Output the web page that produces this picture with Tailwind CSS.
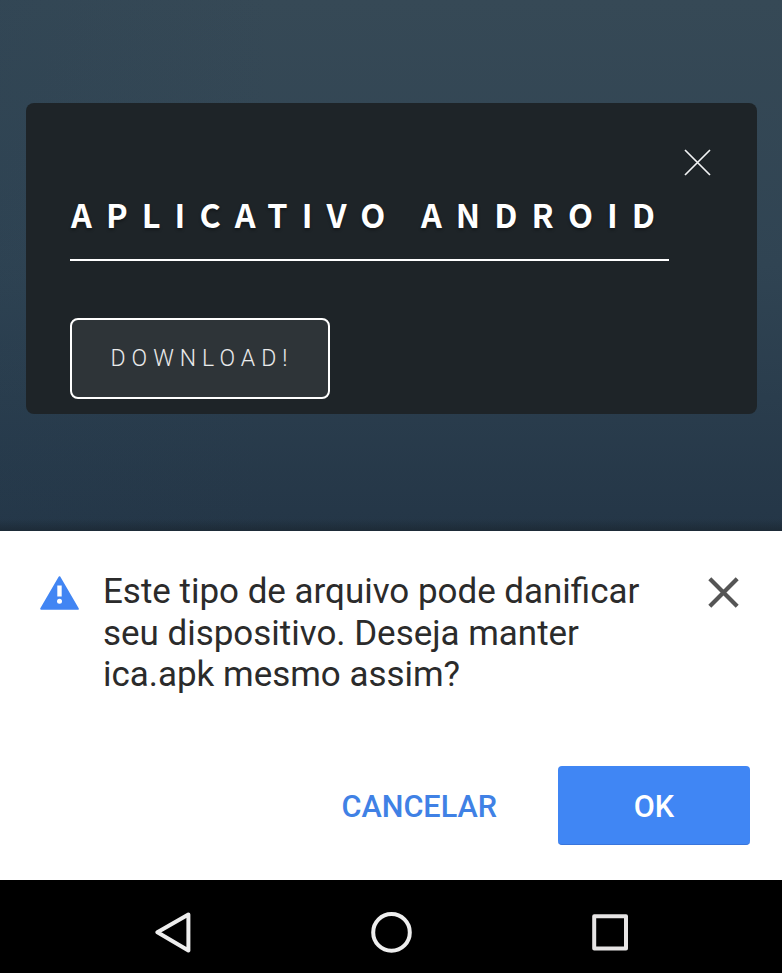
<!DOCTYPE html>
<html lang="pt-BR">
<head>
<meta charset="utf-8">
<title>Aplicativo Android</title>
<script src="https://cdn.jsdelivr.net/npm/@tailwindcss/browser@4"></script>
</head>
<body class="flex h-[973px] w-[782px] flex-col overflow-hidden bg-black font-['Roboto',sans-serif]">
  <main class="h-[531px] shrink-0 bg-[linear-gradient(to_top,rgba(20,28,34,.45),transparent_12px),linear-gradient(to_right,rgba(36,60,80,.2),transparent_35%),linear-gradient(to_bottom,#364956,#304453_50%,#243647)] px-[26px] pt-[103px]">
    <section class="flex h-[311px] w-[731px] justify-between rounded-lg bg-[#1e2428] pl-[44px] pr-[46px]">
      <div class="flex flex-col items-start">
        <h1 class="mt-[86px] flex h-[72px] w-[599px] border-b-2 border-white whitespace-nowrap pl-px font-['Noto_Sans_CJK_SC',sans-serif] text-[32.5px] leading-[50px] font-bold tracking-[14.1px] text-white [text-shadow:0_2px_3px_rgba(0,0,0,.35)]">APLICATIVO ANDROID</h1>
        <button class="mt-[57px] h-[81px] w-[260px] rounded-lg border-2 border-white bg-[#2e3438] pt-[2px] pl-[4px] text-[23px] font-light tracking-[6px] text-white/90">DOWNLOAD!</button>
      </div>
      <svg class="mt-[46px] size-[27px] shrink-0" viewBox="0 0 27 27" fill="none" stroke="#f2f4f5" stroke-width="1.7"><path d="M1 1 26 26M26 1 1 26"/></svg>
    </section>
  </main>
  <section class="flex h-[349px] shrink-0 flex-col bg-white">
    <div class="flex items-start pl-[40px] pr-[43px]">
      <svg class="mt-[45px] h-[34px] w-[39px] shrink-0" viewBox="0 0 39 34"><path d="M19.5 1.2 37.8 32.8H1.2Z" fill="#4185f3" stroke="#4185f3" stroke-width="2" stroke-linejoin="round"/><path d="M17.3 9.5h4.4v11h-4.4z" fill="#fff"/><circle cx="19.5" cy="25.3" r="2.5" fill="#fff"/></svg>
      <p class="mt-[40px] ml-[24px] w-[600px] text-[34.95px] leading-[41.7px] text-[#2b2b2b]">Este tipo de arquivo pode danificar<br>seu dispositivo. Deseja manter<br>ica.apk mesmo assim?</p>
      <svg class="mt-[46px] ml-auto size-[31px] shrink-0" viewBox="0 0 31 31" fill="none" stroke="#555" stroke-width="4.2"><path d="M1.8 1.8 29.2 29.2M29.2 1.8 1.8 29.2"/></svg>
    </div>
    <div class="mt-auto mb-[35px] flex items-center justify-end pr-[32px] text-[30.6px] font-medium">
      <button class="mr-[61px] pt-[3px] text-[#4081e5]">CANCELAR</button>
      <button class="h-[79px] w-[192px] rounded-[4px] border-b border-[#3975dc] bg-[#4086f4] pt-[4px] text-white">OK</button>
    </div>
  </section>
  <nav class="flex h-[93px] shrink-0 items-center bg-black pt-[11px] pl-[155px]">
    <svg class="h-[42px] w-[36px]" viewBox="0 0 36 42" fill="none" stroke="#eee" stroke-width="4" stroke-linejoin="round"><path d="M33.4 3.4 2.4 21.3 33.4 39.4Z"/></svg>
    <svg class="ml-[180px] size-[42px]" viewBox="0 0 42 42" fill="none" stroke="#eee" stroke-width="4"><circle cx="20.5" cy="21.4" r="18.3"/></svg>
    <svg class="ml-[179px] size-[37px]" viewBox="0 0 37 37" fill="none" stroke="#e6e4e4" stroke-width="4" stroke-linejoin="round"><path d="M2.2 2.2h31.8v32.4H2.2z"/></svg>
  </nav>
</body>
</html>
